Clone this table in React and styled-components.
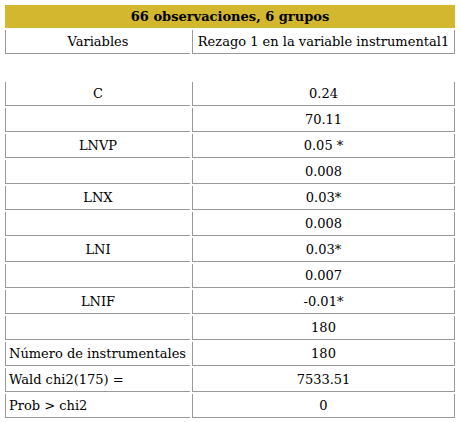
import styled, { createGlobalStyle } from "styled-components";

const GlobalStyle = createGlobalStyle`
	body {
		margin: 0;
		background: #ffffff;
	}
`;

const Page = styled.div`
	padding: 3px;
`;

const Table = styled.table`
	border-collapse: separate;
	border-spacing: 2px;
	width: 454px;
	table-layout: fixed;
	font-family: "DejaVu Serif", serif;
	font-size: 13px;
	color: #000000;
`;

const Title = styled.th`
	background: #d3b72f;
	height: 23px;
	padding: 0;
	box-sizing: border-box;
	font-size: 13px;
	font-weight: bold;
	text-align: center;
`;

const Cell = styled.td`
	height: 24px;
	padding: 0 3px;
	box-sizing: border-box;
	border-left: 1px solid #999999;
	border-bottom: 1px solid #999999;
	border-right: ${(props) => (props.last ? "1px solid #999999" : "none")};
	text-align: ${(props) => (props.align === "left" ? "left" : "center")};
	white-space: nowrap;
	width: ${(props) => (props.last ? "263px" : "185px")};
`;

const Spacer = styled.td`
	height: 24px;
	padding: 0;
`;

const rows = [
	["C", "0.24"],
	["", "70.11"],
	["LNVP", "0.05 *"],
	["", "0.008"],
	["LNX", "0.03*"],
	["", "0.008"],
	["LNI", "0.03*"],
	["", "0.007"],
	["LNIF", "-0.01*"],
	["", "180"],
];

const stats = [
	["Número de instrumentales", "180"],
	["Wald chi2(175) =", "7533.51"],
	["Prob > chi2", "0"],
];

const App = () => {
	return (
		<Page>
			<GlobalStyle />
			<Table>
				<colgroup>
					<col style={{ width: 185 }} />
					<col style={{ width: 263 }} />
				</colgroup>
				<tbody>
					<tr>
						<Title colSpan={2}>66 observaciones, 6 grupos</Title>
					</tr>
					<tr>
						<Cell>Variables</Cell>
						<Cell last>Rezago 1 en la variable instrumental1</Cell>
					</tr>
					<tr>
						<Spacer colSpan={2} />
					</tr>
					{rows.map(([name, value], i) => (
						<tr key={i}>
							<Cell>{name}</Cell>
							<Cell last>{value}</Cell>
						</tr>
					))}
					{stats.map(([name, value]) => (
						<tr key={name}>
							<Cell align="left">{name}</Cell>
							<Cell last>{value}</Cell>
						</tr>
					))}
				</tbody>
			</Table>
		</Page>
	);
};

export default App;
